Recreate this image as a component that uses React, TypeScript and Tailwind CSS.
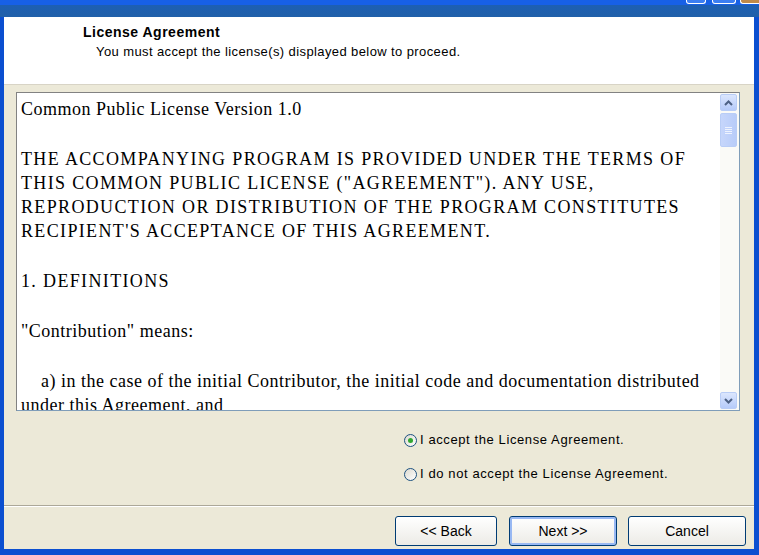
import React from 'react';

// each paragraph is a list of lines, as they break in the original dialog
const paragraphs: { lines: string[]; caps?: boolean; indent?: boolean }[] = [
  { lines: ['Common Public License Version 1.0'] },
  {
    caps: true,
    lines: [
      'THE ACCOMPANYING PROGRAM IS PROVIDED UNDER THE TERMS OF',
      'THIS COMMON PUBLIC LICENSE ("AGREEMENT"). ANY USE,',
      'REPRODUCTION OR DISTRIBUTION OF THE PROGRAM CONSTITUTES',
      "RECIPIENT'S ACCEPTANCE OF THIS AGREEMENT.",
    ],
  },
  { caps: true, lines: ['1. DEFINITIONS'] },
  { lines: ['"Contribution" means:'] },
  {
    lines: [
      '\u00a0\u00a0\u00a0\u00a0a) in the case of the initial Contributor, the initial code and documentation distributed',
      'under this Agreement, and',
    ],
  },
];

const ScrollArrow = ({ down }: { down?: boolean }) => (
  <div className="h-[17px] w-[17px] rounded-[2px] border border-[#b9cdf6] bg-gradient-to-b from-[#dbe6fd] to-[#b6cbfa] flex items-center justify-center">
    <svg width="9" height="6" viewBox="0 0 9 6">
      <path
        d={down ? 'M1 1 L4.5 4.5 L8 1' : 'M1 5 L4.5 1.5 L8 5'}
        fill="none"
        stroke="#4d6185"
        strokeWidth="2"
      />
    </svg>
  </div>
);

const Radio = ({ checked, label }: { checked?: boolean; label: string }) => (
  <div className="flex items-center gap-[3px] h-[16px]">
    <div className="h-[13px] w-[13px] rounded-full border border-[#1c5180] bg-gradient-to-br from-[#dcdad0] to-white flex items-center justify-center">
      {checked && <div className="h-[5px] w-[5px] rounded-full bg-[#31a731]" />}
    </div>
    <span className="text-[13px] tracking-[0.6px] text-black">{label}</span>
  </div>
);

const XpButton = ({ label, isDefault }: { label: string; isDefault?: boolean }) => (
  <button
    className={`h-[30px] rounded-[3px] border border-[#003c74] bg-gradient-to-b from-white to-[#ecebe6] text-[14px] text-black ${
      isDefault ? 'shadow-[inset_0_0_0_2px_#98b8f3]' : ''
    }`}
  >
    {label}
  </button>
);

export default function App() {
  return (
    <div
      className="w-[759px] h-[555px] overflow-hidden flex flex-col bg-[#0b4fd0]"
      style={{ fontFamily: '"Liberation Sans", Arial, sans-serif' }}
    >
      {/* title bar remnant */}
      <div className="h-[17px] shrink-0 relative flex flex-col">
        <div className="h-[5px] bg-[#1760e6]" />
        <div className="flex-1 bg-gradient-to-b from-[#1d5fb2] to-[#2060a9]" />
        <div className="absolute right-[53px] top-0 h-[4px] w-[20px] rounded-b-[3px] border border-t-0 border-white bg-[#3c7ef2]" />
        <div className="absolute right-[23px] top-0 h-[4px] w-[24px] rounded-b-[3px] border border-t-0 border-white bg-[#3c7ef2]" />
        <div className="absolute right-0 top-0 h-[4px] w-[19px] rounded-bl-[3px] border border-t-0 border-r-0 border-white bg-[#c08a4a]" />
      </div>

      <div className="flex-1 flex flex-col ml-[4px] mr-[5px] mb-[6px] bg-[#ece9d8]">
        {/* header */}
        <div className="h-[68px] shrink-0 bg-white border-b border-[#d8d4c6] pl-[79px] pt-[7px]">
          <div className="text-[14px] font-bold tracking-[0.5px] text-black leading-[17px]">License Agreement</div>
          <div className="text-[13px] tracking-[0.4px] text-black leading-[16px] pl-[13px] pt-[3px]">
            You must accept the license(s) displayed below to proceed.
          </div>
        </div>

        {/* body */}
        <div className="h-[420px] shrink-0 flex flex-col">
          <div className="mt-[7px] ml-[12px] w-[724px] h-[319px] border border-[#7f9db9] border-t-[#828282] border-l-[#828282] bg-white flex">
            <div
              className="flex-1 overflow-hidden pl-[4px] pt-[4px] text-[18px] leading-[24px] text-black whitespace-nowrap"
              style={{ fontFamily: '"Liberation Serif", "Times New Roman", serif' }}
            >
              {paragraphs.map((p, i) => (
                <div key={i} className="mb-[26px]">
                  {p.lines.map((line, j) => (
                    <div key={j} className={p.caps ? 'tracking-[1.35px]' : 'tracking-[0.5px]'}>
                      {line}
                    </div>
                  ))}
                </div>
              ))}
            </div>
            <div className="w-[19px] bg-[#fafaf7] flex flex-col pt-[1px] pb-[1px] pr-[1px]">
              <ScrollArrow />
              <div className="mt-[2px] h-[34px] w-[17px] rounded-[2px] border border-[#b9cdf6] bg-gradient-to-r from-[#c6d6fb] to-[#b8ccf9] flex flex-col items-center justify-center gap-[1px]">
                <div className="h-[1px] w-[7px] bg-[#eef3fe]" />
                <div className="h-[1px] w-[7px] bg-[#eef3fe]" />
                <div className="h-[1px] w-[7px] bg-[#eef3fe]" />
                <div className="h-[1px] w-[7px] bg-[#eef3fe]" />
              </div>
              <div className="flex-1" />
              <ScrollArrow down />
            </div>
          </div>

          <div className="ml-[400px] mt-[21px] flex flex-col gap-[18px]">
            <Radio checked label="I accept the License Agreement." />
            <Radio label="I do not accept the License Agreement." />
          </div>
        </div>

        {/* separator */}
        <div className="h-[1px] bg-[#aca899] shrink-0" />
        <div className="h-[1px] bg-white shrink-0" />

        {/* buttons */}
        <div className="flex-1 flex items-start pt-[9px] pl-[391px] gap-[12px]">
          <div className="w-[102px] flex flex-col"><XpButton label="<< Back" /></div>
          <div className="w-[108px] flex flex-col"><XpButton label="Next >>" isDefault /></div>
          <div className="w-[118px] flex flex-col ml-[-1px]"><XpButton label="Cancel" /></div>
        </div>
      </div>
    </div>
  );
}
